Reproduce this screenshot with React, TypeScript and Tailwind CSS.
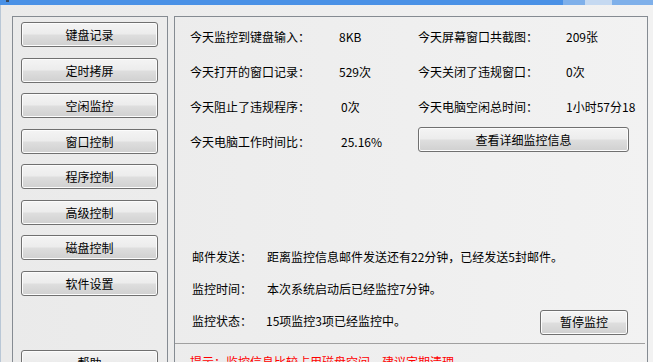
import React from 'react';

const menu = ['键盘记录', '定时拷屏', '空闲监控', '窗口控制', '程序控制', '高级控制', '磁盘控制', '软件设置'];

const btn =
  'flex items-center justify-center h-[25px] rounded-[3px] border border-[#707070] bg-[linear-gradient(to_bottom,#f4f4f4_0%,#ececec_48%,#dedede_52%,#d0d0d0_100%)] shadow-[inset_0_0_0_1px_#fcfcfc] text-[12px] leading-none text-black';

function Stat({ label, value, valueW }: { label: string; value: string; valueW: string }) {
  return (
    <div className="flex items-center h-[35px]">
      <span className={valueW}>{label}</span>
      <span>{value}</span>
    </div>
  );
}

export default function App() {
  return (
    <div
      className="w-[653px] h-[362px] overflow-hidden flex flex-col bg-[linear-gradient(to_right,#eaeaea,#f2f2f2)] text-[12px] text-black"
      style={{ fontFamily: '"Noto Sans CJK SC", "Noto Sans", sans-serif' }}
    >
      {/* window title bar edge */}
      <div className="h-[5px] bg-[#4a91e6] flex shrink-0">
        <div className="w-[6px]" />
        <div className="w-[3px] h-[2px] bg-[#3a4a5e]" />
        <div className="flex-1" />
        <div className="w-[22px] bg-[#7fb0ea]" />
        <div className="w-[27px] bg-[#c5d9f1]" />
        <div className="w-[41px] bg-[#7fb0ea]" />
      </div>

      <div className="flex flex-1 border-l border-[#b9c7d6] pt-[11px] pl-[11px]">
        {/* left menu */}
        <div className="w-[156px] h-[360px] shrink-0 border border-[#858b92] pl-[8px] pr-[9px] pt-[5px] flex flex-col">
          {menu.map((m, i) => (
            <div key={m} className={`${btn} ${i === 0 ? '' : i % 2 ? 'mt-[11px]' : 'mt-[10px]'}`}>
              {m}
            </div>
          ))}
          <div className={`${btn} mt-[54px]`}>帮助</div>
        </div>

        {/* main panel */}
        <div className="ml-[6px] w-[474px] h-[360px] shrink-0 border border-[#858b92] flex flex-col overflow-hidden">
          <div className="h-[327px] shrink-0 mr-[2px] border-b border-[#a0a0a0] flex flex-col">
            <div className="pt-[2px] pl-[15px] grid grid-cols-[228px_1fr]">
              <Stat label="今天监控到键盘输入：" value="8KB" valueW="w-[149px]" />
              <Stat label="今天屏幕窗口共截图：" value="209张" valueW="w-[148px]" />
              <Stat label="今天打开的窗口记录：" value="529次" valueW="w-[149px]" />
              <Stat label="今天关闭了违规窗口：" value="0次" valueW="w-[148px]" />
              <Stat label="今天阻止了违规程序：" value="0次" valueW="w-[151px]" />
              <Stat label="今天电脑空闲总时间：" value="1小时57分18" valueW="w-[148px]" />
              <Stat label="今天电脑工作时间比：" value="25.16%" valueW="w-[151px]" />
              <div className="flex items-start h-[35px] pt-[3px]">
                <div className={`${btn} w-[211px]`}>查看详细监控信息</div>
              </div>
            </div>

            <div className="flex-1" />

            <div className="pl-[17px] pb-[6px] flex flex-col">
              <div className="flex items-center h-[32px]">
                <span className="w-[75px]">邮件发送：</span>
                <span>距离监控信息邮件发送还有22分钟，已经发送5封邮件。</span>
              </div>
              <div className="flex items-center h-[32px]">
                <span className="w-[75px]">监控时间：</span>
                <span>本次系统启动后已经监控7分钟。</span>
              </div>
              <div className="flex items-center h-[32px]">
                <span className="w-[74px]">监控状态：</span>
                <span className="flex-1">15项监控3项已经监控中。</span>
                <div className={`${btn} w-[88px] mr-[17px] mt-[2px]`}>暂停监控</div>
              </div>
            </div>
          </div>

          <div className="h-[36px] shrink-0 flex items-center pl-[15px] text-[#ff0000]">
            提示：监控信息比较占用磁盘空间，建议定期清理
          </div>
        </div>
      </div>
    </div>
  );
}
